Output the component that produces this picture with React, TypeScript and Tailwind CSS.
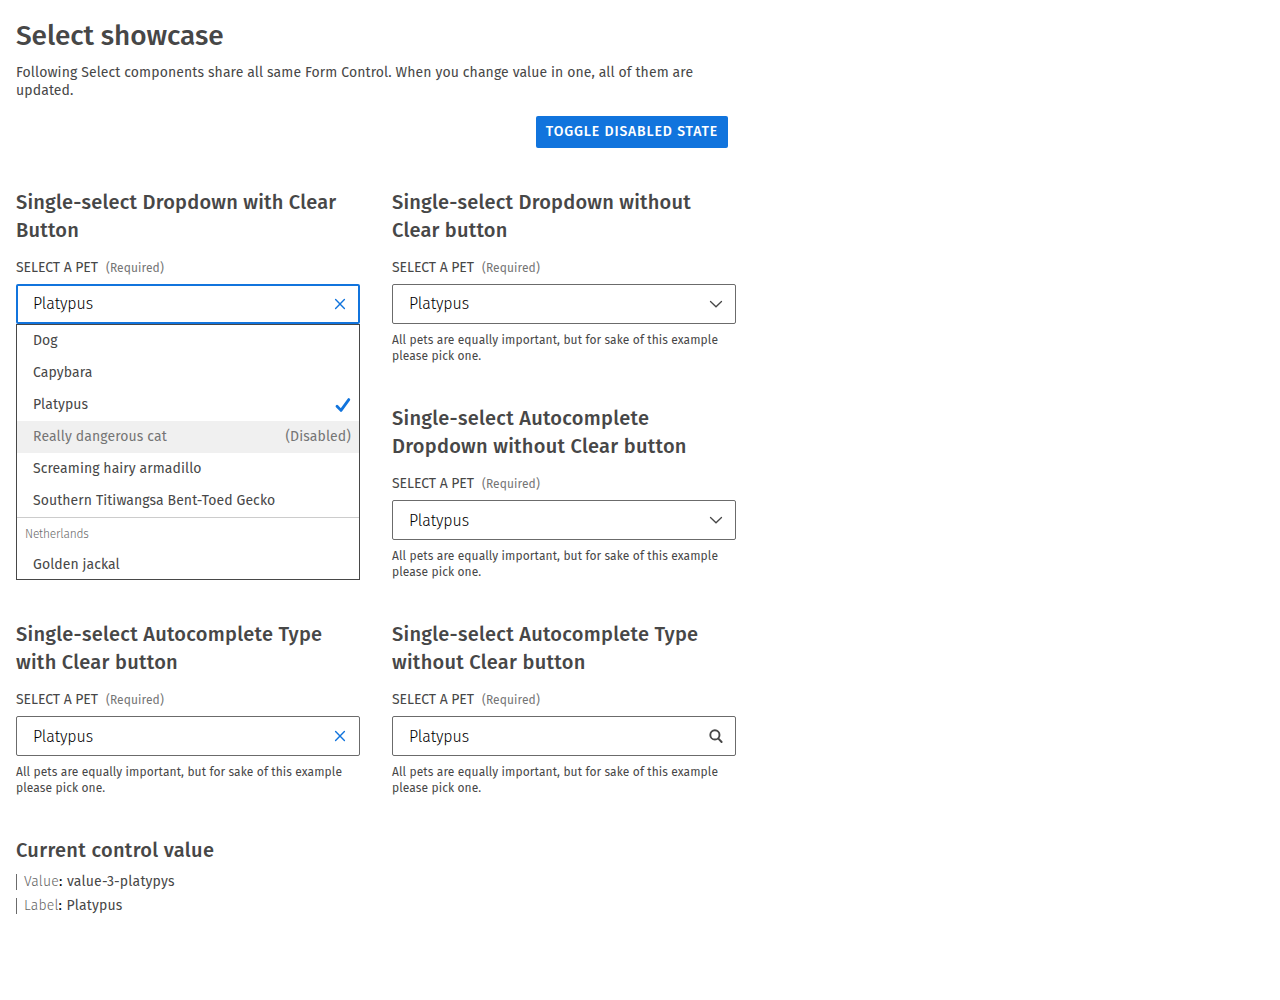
import type { ReactNode } from "react";

type IconName = "clear" | "chevron" | "search";

function ClearIcon() {
  return (
    <svg width="16" height="16" viewBox="0 0 16 16" fill="none" stroke="#1174dd" strokeWidth="1.4" strokeLinecap="round">
      <path d="M3.6 3.6l8.800 8.800M12.400 3.600l-8.800 8.800" />
    </svg>
  );
}

function ChevronIcon() {
  return (
    <svg width="16" height="16" viewBox="0 0 16 16" fill="none" stroke="#474747" strokeWidth="1.3" strokeLinecap="round">
      <path d="M2.5 5.5L8 10.8l5.5-5.3" />
    </svg>
  );
}

function SearchIcon() {
  return (
    <svg width="16" height="16" viewBox="0 0 16 16" fill="none" stroke="#474747" strokeLinecap="round">
      <circle cx="6.9" cy="6.9" r="4.6" strokeWidth="1.9" />
      <path d="M10.4 10.6L13.6 14" strokeWidth="2" />
    </svg>
  );
}

function CheckIcon() {
  return (
    <svg width="16" height="16" viewBox="0 0 16 16" fill="none" stroke="#1174dd" strokeWidth="2.8" strokeLinecap="round" strokeLinejoin="round">
      <path d="M2 9.2L6 13.4L13.8 2.6" />
    </svg>
  );
}

const icons: Record<IconName, ReactNode> = {
  clear: <ClearIcon />,
  chevron: <ChevronIcon />,
  search: <SearchIcon />,
};

function Option({ children }: { children: ReactNode }) {
  return <li className="flex h-8 shrink-0 items-center pl-4 tracking-[0.08px]">{children}</li>;
}

function OptionList() {
  return (
    <ul className="flex h-64 flex-col overflow-hidden border border-[#474747] bg-white text-sm leading-[18px]">
      <Option>Dog</Option>
      <Option>Capybara</Option>
      <li className="flex h-8 shrink-0 items-center justify-between pr-2 pl-4 tracking-[0.08px]">
        Platypus
        <CheckIcon />
      </li>
      <li className="flex h-8 shrink-0 items-center justify-between bg-[#f0f0f0] pr-2 pl-4 tracking-[0.12px] text-[#757575]">
        <span>Really dangerous cat</span>
        <span>(Disabled)</span>
      </li>
      <Option>Screaming hairy armadillo</Option>
      <Option>Southern Titiwangsa Bent-Toed Gecko</Option>
      <li className="flex h-8 shrink-0 items-center border-t border-[#cccccc] pl-2 text-xs font-light tracking-[-0.2px] text-[#6b6b6b]">
        Netherlands
      </li>
      <Option>Golden jackal</Option>
    </ul>
  );
}

interface SelectFieldProps {
  title: string;
  icon: IconName;
  open?: boolean;
  editable?: boolean;
}

function SelectField({ title, icon, open = false, editable = false }: SelectFieldProps) {
  return (
    <section className="h-[216px] w-[344px]">
      <h2
        className={
          editable
            ? "text-xl leading-7 font-medium tracking-[0.27px]"
            : "text-xl leading-7 font-medium tracking-[0.22px]"
        }
      >
        {title}
      </h2>
      <div className="mt-[15px] flex h-[18px] items-baseline gap-2 text-sm leading-[18px]">
        <span className="tracking-[-0.06px]">SELECT A PET</span>
        <span className="text-xs tracking-[0.1px] text-[#757575]">(Required)</span>
      </div>
      <div
        className={
          open
            ? "mt-[7px] flex h-10 items-center justify-between rounded-xs border-2 border-[#1174dd] pr-[10px] pl-[15px]"
            : "mt-[7px] flex h-10 items-center justify-between rounded-xs border border-[#6b6b6b] pr-[11px] pl-4"
        }
      >
        <span
          className={
            editable
              ? "pt-0.5 text-base leading-6 font-light tracking-[-0.1px] text-black"
              : "text-base leading-6 font-light tracking-[-0.1px] text-black"
          }
        >
          Platypus
        </span>
        {icons[icon]}
      </div>
      {open ? (
        <OptionList />
      ) : (
        <p className="mt-2 text-xs leading-4 tracking-[0.1px]">
          All pets are equally important, but for sake of this example please pick one.
        </p>
      )}
    </section>
  );
}

function ValueRow({ name, value }: { name: string; value: string }) {
  return (
    <div className="flex h-4 items-center border-l border-[#6b6b6b] pl-[7px] text-sm leading-4 tracking-[0.18px]">
      <span className="font-light text-[#666666]">{name}</span>
      <span className="text-black">:</span>
      <span className="pl-[4.5px]">{value}</span>
    </div>
  );
}

export default function App() {
  return (
    <main className="px-4 font-['Fira_Sans','Noto_Sans',sans-serif] text-[#474747]">
      <h1 className="pt-4 text-[28px] leading-10 font-medium tracking-[-0.08px]">Select showcase</h1>
      <p className="mt-2 w-[712px] text-sm leading-[18px] tracking-[0.11px]">
        Following Select components share all same Form Control. When you change value in one, all of them are updated.
      </p>
      <div className="mt-4 flex w-[712px] justify-end">
        <button className="flex h-8 w-48 items-center justify-center rounded-xs bg-[#1174dd] pb-px text-sm font-medium tracking-[0.88px] text-white">
          TOGGLE DISABLED STATE
        </button>
      </div>
      <div className="mt-10 grid w-[720px] grid-cols-2 gap-x-8">
        <SelectField title="Single-select Dropdown with Clear Button" icon="clear" open />
        <SelectField title="Single-select Dropdown without Clear button" icon="chevron" />
        <div />
        <SelectField title="Single-select Autocomplete Dropdown without Clear button" icon="chevron" editable />
        <SelectField title="Single-select Autocomplete Type with Clear button" icon="clear" editable />
        <SelectField title="Single-select Autocomplete Type without Clear button" icon="search" editable />
      </div>
      <h2 className="text-xl leading-7 font-medium tracking-[0.32px]">Current control value</h2>
      <div className="mt-[10px] flex flex-col gap-2">
        <ValueRow name="Value" value="value-3-platypys" />
        <ValueRow name="Label" value="Platypus" />
      </div>
    </main>
  );
}
